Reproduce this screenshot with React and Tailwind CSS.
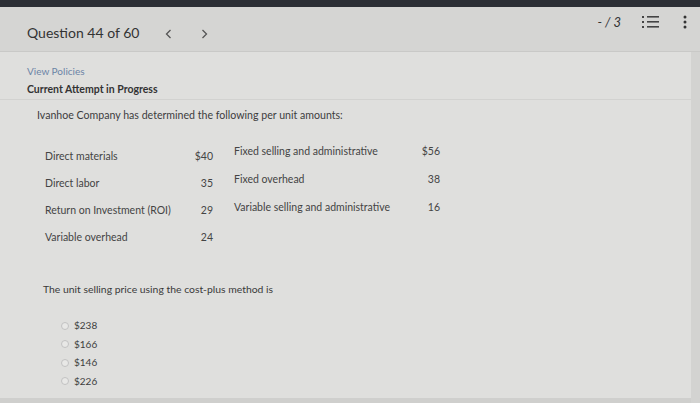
import React from "react";

const font = { fontFamily: "Lato, 'Open Sans', sans-serif" };

const leftRows = [
  ["Direct materials", "$40"],
  ["Direct labor", "35"],
  ["Return on Investment (ROI)", "29"],
  ["Variable overhead", "24"],
];

const rightRows = [
  ["Fixed selling and administrative", "$56"],
  ["Fixed overhead", "38"],
  ["Variable selling and administrative", "16"],
];

const options = ["$238", "$166", "$146", "$226"];

const Chevron = ({ dir }) => (
  <svg width="7" height="10" viewBox="0 0 7 10">
    <path
      d={dir === "left" ? "M5.5 1 L1.5 5 L5.5 9" : "M1.5 1 L5.5 5 L1.5 9"}
      fill="none"
      stroke="#555"
      strokeWidth="1.3"
    />
  </svg>
);

export default function App() {
  return (
    <div
      className="w-[700px] h-[403px] overflow-hidden flex flex-col bg-[#dcdcda] text-[#3a3a3a]"
      style={font}
    >
      {/* dark top edge */}
      <div className="h-[7px] bg-[#2c2f35] shrink-0" />

      {/* header */}
      <div className="h-[45px] shrink-0 bg-[#d5d5d3] border-b border-[#c9c9c7] flex pl-[27px] pr-[13px]">
        <div className="flex items-end pb-[8px]">
          <span className="text-[14px] text-[#333]">Question 44 of 60</span>
          <span className="flex gap-[29px] ml-[26px] pb-[4px]">
            <Chevron dir="left" />
            <Chevron dir="right" />
          </span>
        </div>
        <div className="ml-auto flex items-start pt-[6px] text-[#333]">
          <span className="text-[13px] italic">- / 3</span>
          <svg width="17" height="14" viewBox="0 0 17 14" className="mt-[2px] ml-[21px]">
            <g fill="#444">
              <rect x="0" y="1" width="2" height="2" />
              <rect x="0" y="6" width="2" height="2" />
              <rect x="0" y="11" width="2" height="2" />
              <rect x="5" y="1" width="12" height="1.6" />
              <rect x="5" y="6" width="12" height="1.6" />
              <rect x="5" y="11" width="12" height="1.6" />
            </g>
          </svg>
          <svg width="4" height="14" viewBox="0 0 4 14" className="mt-[2px] ml-[24px]">
            <g fill="#333">
              <circle cx="2" cy="2" r="1.5" />
              <circle cx="2" cy="7" r="1.5" />
              <circle cx="2" cy="12" r="1.5" />
            </g>
          </svg>
        </div>
      </div>

      {/* body */}
      <div className="flex-1 flex flex-col bg-[#dfdfdd] border-r-[9px] border-r-[#d3d3d1]">
        <div className="pl-[27px] pt-[12px] pb-[3px] border-b border-[#d2d2d0]">
          <div className="text-[10px] text-[#6c84a6] leading-[14px]">View Policies</div>
          <div className="text-[10.5px] font-bold text-[#333] leading-[14px] mt-[4px]">
            Current Attempt in Progress
          </div>
        </div>

        <div className="pl-[37px] pt-[8px] text-[10.6px] text-[#3d3d3d] leading-[14px]">
          Ivanhoe Company has determined the following per unit amounts:
        </div>

        <div className="flex pl-[45px] mt-[23px] text-[10.5px] text-[#444]">
          <div className="flex flex-col gap-[13px] pt-[4px]">
            {leftRows.map(([label, val]) => (
              <div key={label} className="flex w-[168px] leading-[14px]">
                <span>{label}</span>
                <span className="ml-auto">{val}</span>
              </div>
            ))}
          </div>
          <div className="flex flex-col gap-[14px] ml-[21px] -mt-[1px]">
            {rightRows.map(([label, val]) => (
              <div key={label} className="flex w-[206px] leading-[14px]">
                <span>{label}</span>
                <span className="ml-auto">{val}</span>
              </div>
            ))}
          </div>
        </div>

        <div className="pl-[43px] mt-[38px] text-[10.4px] text-[#3a3a3a] leading-[14px]">
          The unit selling price using the cost-plus method is
        </div>

        <div className="pl-[61px] mt-[23px] flex flex-col gap-[5px]">
          {options.map((o) => (
            <label
              key={o}
              className="flex items-center gap-[5px] text-[10px] text-[#3d3d3d] leading-[13.5px]"
            >
              <span className="w-[8px] h-[8px] rounded-full border border-[#c2c2c2] bg-[#e8e8e6]" />
              <span>{o}</span>
            </label>
          ))}
        </div>

        <div className="mt-auto h-[5px] bg-[#cfcfcd]" />
      </div>
    </div>
  );
}
